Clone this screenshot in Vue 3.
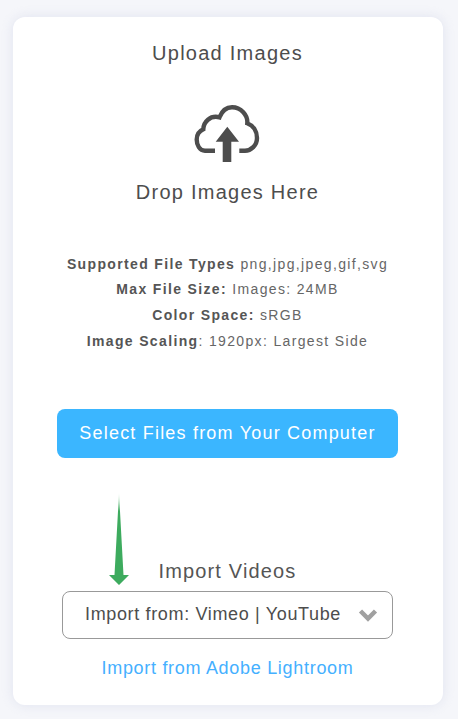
<template>
  <div class="page">
    <section class="card">
      <h2 class="title">Upload Images</h2>
      <svg class="cloud" viewBox="0 0 75 68" width="75" height="68" aria-hidden="true">
        <path d="M25 50.700H15C9.500 50.700 6.700 45 6.700 39.500C6.700 34.500 9.500 31 13.300 29.300C13.500 22 20 15 29.500 17.300C32 11 36 7.300 42 7.300C51 7.300 58 15 57.300 23.300C63 25.500 67 31 67 38C67 45.500 61 50.700 55 50.700H49.300" fill="none" stroke="#4d4d4d" stroke-width="4.400"/>
        <path d="M37.300 26.700L49 41.700H41.300V62H32.700V41.700H25.700Z" fill="#4d4d4d"/>
      </svg>
      <p class="drop">Drop Images Here</p>
      <ul class="specs">
        <li><b>Supported File Types</b> png,jpg,jpeg,gif,svg</li>
        <li><b>Max File Size:</b> Images: 24MB</li>
        <li><b>Color Space:</b> sRGB</li>
        <li><b>Image Scaling</b>: 1920px: Largest Side</li>
      </ul>
      <button class="select" type="button">Select Files from Your Computer</button>
      <div class="import">
        <svg class="arrow" viewBox="0 0 20 92" width="20" height="92" aria-hidden="true">
          <defs>
            <linearGradient id="fade" x1="0" y1="0" x2="0" y2="1">
              <stop offset="0" stop-color="#3dab5e" stop-opacity="0.1"/>
              <stop offset="0.2" stop-color="#3dab5e"/>
            </linearGradient>
          </defs>
          <path d="M10 0L14.500 82H20L10 92L0 82H5.500Z" fill="url(#fade)"/>
        </svg>
        <h3 class="import-title">Import Videos</h3>
        <div class="dropdown">
          <span class="dropdown-label">Import from: Vimeo | YouTube</span>
          <svg class="chev" viewBox="0 0 20 14" width="20" height="14" aria-hidden="true">
            <path d="M2.500 3L10 10.500L17.500 3" fill="none" stroke="#a0a0a0" stroke-width="4.500"/>
          </svg>
        </div>
        <a class="lightroom" href="#">Import from Adobe Lightroom</a>
      </div>
    </section>
  </div>
</template>

<script setup>
</script>

<style>
html, body { margin: 0; background: #f3f4f9; }
</style>

<style scoped>
.page {
  width: 458px;
  height: 719px;
  padding: 17px 15px 14px 13px;
  box-sizing: border-box;
  overflow: hidden;
  background: #f5f6fa;
  font-family: "Liberation Sans", Arial, sans-serif;
}
.card {
  height: 688px;
  box-sizing: border-box;
  padding: 24px 1px 0 0;
  background: #fff;
  border-radius: 12px;
  box-shadow: 0 0 12px rgba(200, 204, 226, 0.45);
  display: flex;
  flex-direction: column;
  align-items: center;
  color: #4d4d4d;
}
.title {
  margin: 0;
  font-size: 20px;
  font-weight: 400;
  line-height: 24px;
  letter-spacing: 1.25px;
}
.cloud { margin-top: 35px; display: block; }
.drop {
  margin: 12px 0 0;
  font-size: 20px;
  line-height: 24px;
  letter-spacing: 1.25px;
}
.specs {
  list-style: none;
  margin: 47.5px 0 0;
  padding: 0;
  text-align: center;
  font-size: 14px;
  line-height: 25.7px;
  letter-spacing: 1.35px;
  color: #666;
}
.specs b { font-weight: 700; color: #555; }
.select {
  margin-top: 54.7px;
  width: 341px;
  height: 49px;
  border: 0;
  border-radius: 8px;
  background: #3bb6ff;
  color: #fff;
  font: inherit;
  font-size: 18px;
  letter-spacing: 1.2px;
}
.import {
  position: relative;
  margin-top: 101px;
  width: 331px;
  display: flex;
  flex-direction: column;
  align-items: center;
}
.arrow { position: absolute; left: 47px; top: -66px; }
.import-title {
  margin: 0;
  font-size: 20px;
  font-weight: 400;
  line-height: 24px;
  letter-spacing: 1.15px;
  color: #555;
}
.dropdown {
  margin-top: 8px;
  width: 331px;
  height: 48px;
  box-sizing: border-box;
  border: 1px solid #999;
  border-radius: 8px;
  padding: 0 14px 0 22px;
  display: flex;
  align-items: center;
  justify-content: space-between;
  font-size: 18px;
  letter-spacing: 0.65px;
}
.dropdown-label { margin-bottom: 2px; }
.lightroom {
  margin-top: 18px;
  font-size: 18px;
  line-height: 22px;
  letter-spacing: 0.7px;
  color: #45b0ff;
  text-decoration: none;
}
</style>
